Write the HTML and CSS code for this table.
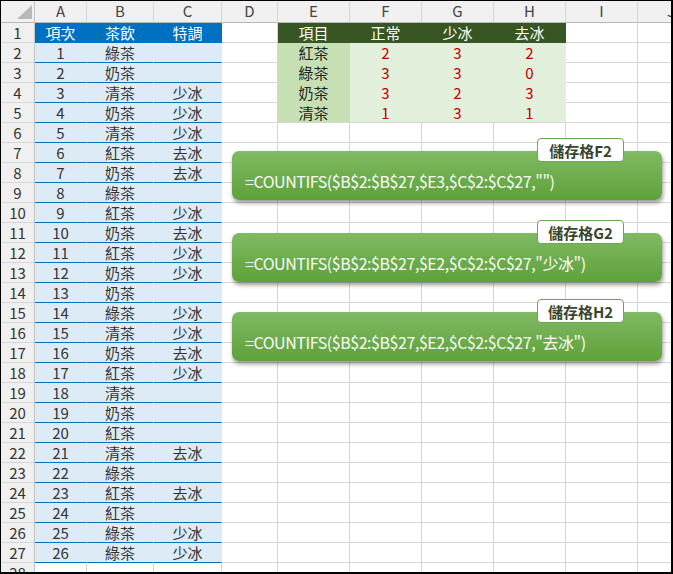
FILE: index.html
```html
<!DOCTYPE html>
<html lang="zh-Hant">
<head>
<meta charset="utf-8">
<title>COUNTIFS</title>
<link rel="stylesheet" href="styles.css">
</head>
<body>
<div class="sheet">
  <div class="row head">
    <div class="corner"><svg width="15" height="14" viewBox="0 0 15 14"><polygon points="15,0 15,14 0,14" fill="#b9b9b9"/></svg></div>
    <div class="ch">A</div><div class="ch">B</div><div class="ch">C</div><div class="ch">D</div><div class="ch">E</div><div class="ch">F</div><div class="ch">G</div><div class="ch">H</div><div class="ch">I</div><div class="ch jcol">J</div>
  </div>
  <div class="row"><div class="rh">1</div><div class="c b1">項次</div><div class="c b1">茶飲</div><div class="c b1">特調</div><div class="c"></div><div class="c g1">項目</div><div class="c g1">正常</div><div class="c g1">少冰</div><div class="c g1">去冰</div><div class="c"></div><div class="c"></div></div>
  <div class="row"><div class="rh">2</div><div class="c b2">1</div><div class="c b2">綠茶</div><div class="c b2"></div><div class="c"></div><div class="c g2">紅茶</div><div class="c g3">2</div><div class="c g3">3</div><div class="c g3">2</div><div class="c"></div><div class="c"></div></div>
  <div class="row"><div class="rh">3</div><div class="c b2">2</div><div class="c b2">奶茶</div><div class="c b2"></div><div class="c"></div><div class="c g2">綠茶</div><div class="c g3">3</div><div class="c g3">3</div><div class="c g3">0</div><div class="c"></div><div class="c"></div></div>
  <div class="row"><div class="rh">4</div><div class="c b2">3</div><div class="c b2">清茶</div><div class="c b2">少冰</div><div class="c"></div><div class="c g2">奶茶</div><div class="c g3">3</div><div class="c g3">2</div><div class="c g3">3</div><div class="c"></div><div class="c"></div></div>
  <div class="row"><div class="rh">5</div><div class="c b2">4</div><div class="c b2">奶茶</div><div class="c b2">少冰</div><div class="c"></div><div class="c g2 glast">清茶</div><div class="c g3 glast">1</div><div class="c g3 glast">3</div><div class="c g3 glast">1</div><div class="c"></div><div class="c"></div></div>
  <div class="row"><div class="rh">6</div><div class="c b2">5</div><div class="c b2">清茶</div><div class="c b2">少冰</div><div class="c"></div><div class="c"></div><div class="c"></div><div class="c"></div><div class="c"></div><div class="c"></div><div class="c"></div></div>
  <div class="row"><div class="rh">7</div><div class="c b2">6</div><div class="c b2">紅茶</div><div class="c b2">去冰</div><div class="c"></div><div class="c"></div><div class="c"></div><div class="c"></div><div class="c"></div><div class="c"></div><div class="c"></div></div>
  <div class="row"><div class="rh">8</div><div class="c b2">7</div><div class="c b2">奶茶</div><div class="c b2">去冰</div><div class="c"></div><div class="c"></div><div class="c"></div><div class="c"></div><div class="c"></div><div class="c"></div><div class="c"></div></div>
  <div class="row"><div class="rh">9</div><div class="c b2">8</div><div class="c b2">綠茶</div><div class="c b2"></div><div class="c"></div><div class="c"></div><div class="c"></div><div class="c"></div><div class="c"></div><div class="c"></div><div class="c"></div></div>
  <div class="row"><div class="rh">10</div><div class="c b2">9</div><div class="c b2">紅茶</div><div class="c b2">少冰</div><div class="c"></div><div class="c"></div><div class="c"></div><div class="c"></div><div class="c"></div><div class="c"></div><div class="c"></div></div>
  <div class="row"><div class="rh">11</div><div class="c b2">10</div><div class="c b2">奶茶</div><div class="c b2">去冰</div><div class="c"></div><div class="c"></div><div class="c"></div><div class="c"></div><div class="c"></div><div class="c"></div><div class="c"></div></div>
  <div class="row"><div class="rh">12</div><div class="c b2">11</div><div class="c b2">紅茶</div><div class="c b2">少冰</div><div class="c"></div><div class="c"></div><div class="c"></div><div class="c"></div><div class="c"></div><div class="c"></div><div class="c"></div></div>
  <div class="row"><div class="rh">13</div><div class="c b2">12</div><div class="c b2">奶茶</div><div class="c b2">少冰</div><div class="c"></div><div class="c"></div><div class="c"></div><div class="c"></div><div class="c"></div><div class="c"></div><div class="c"></div></div>
  <div class="row"><div class="rh">14</div><div class="c b2">13</div><div class="c b2">奶茶</div><div class="c b2"></div><div class="c"></div><div class="c"></div><div class="c"></div><div class="c"></div><div class="c"></div><div class="c"></div><div class="c"></div></div>
  <div class="row"><div class="rh">15</div><div class="c b2">14</div><div class="c b2">綠茶</div><div class="c b2">少冰</div><div class="c"></div><div class="c"></div><div class="c"></div><div class="c"></div><div class="c"></div><div class="c"></div><div class="c"></div></div>
  <div class="row"><div class="rh">16</div><div class="c b2">15</div><div class="c b2">清茶</div><div class="c b2">少冰</div><div class="c"></div><div class="c"></div><div class="c"></div><div class="c"></div><div class="c"></div><div class="c"></div><div class="c"></div></div>
  <div class="row"><div class="rh">17</div><div class="c b2">16</div><div class="c b2">奶茶</div><div class="c b2">去冰</div><div class="c"></div><div class="c"></div><div class="c"></div><div class="c"></div><div class="c"></div><div class="c"></div><div class="c"></div></div>
  <div class="row"><div class="rh">18</div><div class="c b2">17</div><div class="c b2">紅茶</div><div class="c b2">少冰</div><div class="c"></div><div class="c"></div><div class="c"></div><div class="c"></div><div class="c"></div><div class="c"></div><div class="c"></div></div>
  <div class="row"><div class="rh">19</div><div class="c b2">18</div><div class="c b2">清茶</div><div class="c b2"></div><div class="c"></div><div class="c"></div><div class="c"></div><div class="c"></div><div class="c"></div><div class="c"></div><div class="c"></div></div>
  <div class="row"><div class="rh">20</div><div class="c b2">19</div><div class="c b2">奶茶</div><div class="c b2"></div><div class="c"></div><div class="c"></div><div class="c"></div><div class="c"></div><div class="c"></div><div class="c"></div><div class="c"></div></div>
  <div class="row"><div class="rh">21</div><div class="c b2">20</div><div class="c b2">紅茶</div><div class="c b2"></div><div class="c"></div><div class="c"></div><div class="c"></div><div class="c"></div><div class="c"></div><div class="c"></div><div class="c"></div></div>
  <div class="row"><div class="rh">22</div><div class="c b2">21</div><div class="c b2">清茶</div><div class="c b2">去冰</div><div class="c"></div><div class="c"></div><div class="c"></div><div class="c"></div><div class="c"></div><div class="c"></div><div class="c"></div></div>
  <div class="row"><div class="rh">23</div><div class="c b2">22</div><div class="c b2">綠茶</div><div class="c b2"></div><div class="c"></div><div class="c"></div><div class="c"></div><div class="c"></div><div class="c"></div><div class="c"></div><div class="c"></div></div>
  <div class="row"><div class="rh">24</div><div class="c b2">23</div><div class="c b2">紅茶</div><div class="c b2">去冰</div><div class="c"></div><div class="c"></div><div class="c"></div><div class="c"></div><div class="c"></div><div class="c"></div><div class="c"></div></div>
  <div class="row"><div class="rh">25</div><div class="c b2">24</div><div class="c b2">紅茶</div><div class="c b2"></div><div class="c"></div><div class="c"></div><div class="c"></div><div class="c"></div><div class="c"></div><div class="c"></div><div class="c"></div></div>
  <div class="row"><div class="rh">26</div><div class="c b2">25</div><div class="c b2">綠茶</div><div class="c b2">少冰</div><div class="c"></div><div class="c"></div><div class="c"></div><div class="c"></div><div class="c"></div><div class="c"></div><div class="c"></div></div>
  <div class="row"><div class="rh">27</div><div class="c b2">26</div><div class="c b2">綠茶</div><div class="c b2">少冰</div><div class="c"></div><div class="c"></div><div class="c"></div><div class="c"></div><div class="c"></div><div class="c"></div><div class="c"></div></div>
  <div class="row"><div class="rh">28</div><div class="c"></div><div class="c"></div><div class="c"></div><div class="c"></div><div class="c"></div><div class="c"></div><div class="c"></div><div class="c"></div><div class="c"></div><div class="c"></div></div>

  <div class="callout co1"><span class="tag">儲存格F2</span><span class="formula">=COUNTIFS($B$2:$B$27,$E3,$C$2:$C$27,"")</span></div>
  <div class="callout co2"><span class="tag">儲存格G2</span><span class="formula">=COUNTIFS($B$2:$B$27,$E2,$C$2:$C$27,"少冰")</span></div>
  <div class="callout co3"><span class="tag">儲存格H2</span><span class="formula">=COUNTIFS($B$2:$B$27,$E2,$C$2:$C$27,"去冰")</span></div>
</div>
</body>
</html>
```
FILE: styles.css
```css
* { box-sizing: border-box; }
html, body { margin: 0; padding: 0; background: #fff; }
.sheet {
  position: relative;
  width: 673px;
  height: 574px;
  border-style: solid;
  border-color: #000;
  border-width: 1px 2px 2px 1px;
  overflow: hidden;
  font-family: "Noto Sans CJK TC", "Noto Sans", sans-serif;
  font-size: 15px;
  color: #2b2b2b;
}
.row {
  display: grid;
  grid-template-columns: 34px 52px 67px 68px 56px 72px 72px 72px 72px 72px 60px;
  height: 20px;
}
.row.head { height: 22px; }
.row > div {
  display: flex;
  align-items: center;
  justify-content: center;
  line-height: 1;
  white-space: nowrap;
  overflow: hidden;
}
.corner {
  background: #f0f0f0;
  border-right: 1px solid #c3c3c3;
  border-bottom: 1px solid #b8b8b8;
  justify-content: flex-end !important;
  align-items: flex-end !important;
  padding: 0 2px 3px 0;
}
.ch {
  background: #f0f0f0;
  border-right: 1px solid #d6d6d6;
  border-bottom: 1px solid #b8b8b8;
  color: #444;
  font-size: 15px;
  padding-bottom: 3px;
}
.jcol { justify-content: flex-end !important; padding-right: 22px; }
.rh {
  background: #f0f0f0;
  border-right: 1px solid #c3c3c3;
  border-bottom: 1px solid #d6d6d6;
  color: #333;
  font-size: 15px;
}
.c {
  border-right: 1px solid #d6d6d6;
  border-bottom: 1px solid #d6d6d6;
}
.b1 {
  background: #0070c0;
  color: #fff;
  border-right-color: transparent;
  border-bottom-color: transparent;
}
.b2 {
  background: #ddebf7;
  color: #333;
  border-right-color: transparent;
  border-bottom-color: #0070c0;
}
.g1 {
  background: #375623;
  color: #fff;
  border-right-color: transparent;
  border-bottom-color: transparent;
}
.g2 {
  background: #c6e0b4;
  color: #222;
  border-right-color: transparent;
  border-bottom-color: transparent;
}
.g3 {
  background: #e2efda;
  color: #c00000;
  border-right-color: transparent;
  border-bottom-color: transparent;
}
.glast { border-bottom-color: #d6d6d6; }

.callout {
  position: absolute;
  left: 231px;
  width: 430px;
  height: 49px;
  border-radius: 7px;
  background: linear-gradient(#80ba63, #5ea13a);
  box-shadow: 1px 3px 4px rgba(0, 0, 0, 0.4);
  display: flex;
  align-items: center;
  padding: 11px 0 0 13px;
}
.co1 { top: 150px; }
.co2 { top: 232px; }
.co3 { top: 311px; }
.formula {
  color: #fafafa;
  font-size: 16px;
  letter-spacing: -0.45px;
  white-space: nowrap;
}
.tag {
  position: absolute;
  left: 305px;
  top: -13px;
  width: 87px;
  height: 24px;
  background: #fff;
  border: 1px solid #6aa84f;
  border-radius: 4px;
  color: #36452c;
  font-size: 15px;
  font-weight: bold;
  display: flex;
  align-items: center;
  justify-content: center;
}
```
